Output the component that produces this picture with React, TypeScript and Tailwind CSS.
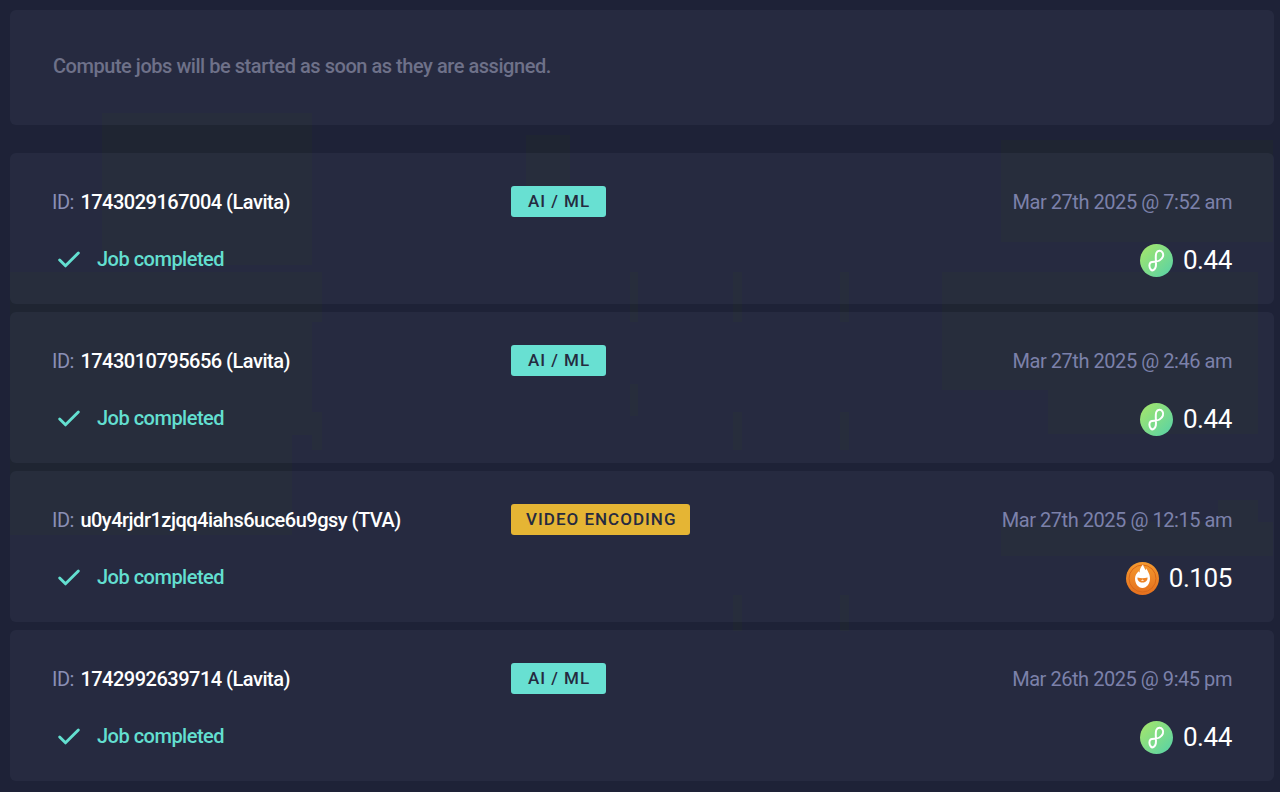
import { Check } from 'lucide-react';

const jobs = [
  { id: '1743029167004 (Lavita)', tag: 'AI / ML', date: 'Mar 27th 2025 @ 7:52 am', amount: '0.44', coin: 'flux' },
  { id: '1743010795656 (Lavita)', tag: 'AI / ML', date: 'Mar 27th 2025 @ 2:46 am', amount: '0.44', coin: 'flux' },
  { id: 'u0y4rjdr1zjqq4iahs6uce6u9gsy (TVA)', tag: 'VIDEO ENCODING', date: 'Mar 27th 2025 @ 12:15 am', amount: '0.105', coin: 'tva' },
  { id: '1742992639714 (Lavita)', tag: 'AI / ML', date: 'Mar 26th 2025 @ 9:45 pm', amount: '0.44', coin: 'flux' },
];

// blocks of the dim page backdrop that show through the cards
const blocks = [
  [102, 113, 210, 152],
  [526, 135, 44, 78],
  [1001, 140, 272, 102],
  [10, 272, 312, 50],
  [10, 322, 302, 113],
  [10, 435, 282, 100],
  [312, 412, 10, 38],
  [942, 272, 316, 118],
  [1048, 390, 210, 44],
  [1001, 522, 272, 34],
  [1218, 500, 40, 22],
  [630, 272, 8, 50],
  [733, 272, 9, 50],
  [840, 272, 9, 50],
  [630, 384, 8, 32],
  [733, 412, 9, 38],
  [840, 412, 9, 38],
  [733, 595, 9, 36],
  [840, 595, 9, 36],
];

const Backdrop = () => (
  <svg width="1280" height="792" className="absolute inset-0">
    {blocks.map(([x, y, w, h]) => (
      <rect key={`${x}-${y}`} x={x} y={y} width={w} height={h} fill="#1f2532" />
    ))}
  </svg>
);

const FluxCoin = ({ uid }: { uid: string }) => (
  <svg width="33" height="33" viewBox="0 0 33 33" className="shrink-0">
    <defs>
      <linearGradient id={uid} x1="0" y1="0" x2="1" y2="1">
        <stop offset="0" stopColor="#a9e768" />
        <stop offset="1" stopColor="#55d1a9" />
      </linearGradient>
    </defs>
    <circle cx="16.5" cy="16.5" r="16.5" fill={`url(#${uid})`} />
    <path
      d="M10.500 18.500C13 17.500 17 18 19.500 16.500 23 14.500 24 11 22.500 8.500 21 6 17.500 6 16.300 9 15 12.500 16.500 18 15.800 22.500 15.300 25.500 12.500 27.500 10.800 25.500 9 23.500 9 20 10.500 18.500z"
      fill="none"
      stroke="#fff"
      strokeWidth="2"
      strokeLinejoin="round"
    />
  </svg>
);

const TvaCoin = ({ uid }: { uid: string }) => (
  <svg width="33" height="33" viewBox="0 0 33 33" className="shrink-0">
    <defs>
      <linearGradient id={uid} x1="0" y1="0" x2="0" y2="1">
        <stop offset="0" stopColor="#f59a2e" />
        <stop offset="1" stopColor="#e5701e" />
      </linearGradient>
    </defs>
    <circle cx="16.5" cy="16.5" r="16.5" fill={`url(#${uid})`} />
    <circle cx="16.5" cy="16.5" r="13.500" fill="none" stroke="#d9691b" strokeWidth="1" />
    <path
      d="M17 2.500c.6 2.600 1.700 3.800 2.500 5.500.7-.4 1-1 1.200-1.700 0 2.500 3.300 4.600 3.300 10.200 0 5-3.200 9.500-7.500 9.500S9 21.500 9 16.500c0-3.600 2-5.400 3.500-7.300.3.700.6 1 1.100 1.300-.2-3 1.400-5.700 3.400-8z"
      fill="#fff"
    />
    <path d="M11.500 15.500c3.300 1.100 6.700 1.100 10 0 .3 2.200-1 4.800-5 5.100-4-.3-5.300-2.900-5-5.100z" fill="#ee8427" />
    <path d="M16.500 17.500l1.600 1.200h-3.200z" fill="#fff" />
  </svg>
);

export default function App() {
  return (
    <div
      className="relative min-h-[792px] overflow-hidden bg-[#1e2237] pt-[10px] pl-[10px] pr-[6px] flex flex-col"
      style={{ fontFamily: 'Roboto, sans-serif' }}
    >
      <Backdrop />

      <div className="relative h-[115px] bg-[#555f7b]/15 rounded-md pl-[43px] pb-[3px] flex items-center mb-[28px]">
        <span className="text-[#6e7189] text-[20px] font-medium tracking-[-0.46px]">
          Compute jobs will be started as soon as they are assigned.
        </span>
      </div>

      <div className="relative flex flex-col gap-2">
        {jobs.map((job, i) => (
          <div key={job.id} className="h-[151px] bg-[#555f7b]/15 rounded-md pl-[42px] pr-[42px] pt-[33px]">
            <div className="flex items-center h-[31px]">
              <div className="w-[459px] text-[20px] tracking-[-0.5px] whitespace-nowrap">
                <span className="text-[#8a8fb5] mr-[2px]">ID: </span>
                <span className="text-white font-medium">{job.id}</span>
              </div>
              <span
                className={`h-[31px] min-w-[95px] pl-[15px] pr-[14px] flex items-center justify-center rounded-[3px] text-[17px] font-medium tracking-[1px] text-[#252a40] ${
                  job.coin === 'tva' ? 'bg-[#e5b534]' : 'bg-[#68e0d2]'
                }`}
              >
                {job.tag}
              </span>
              <span className="ml-auto text-[20px] tracking-[-0.45px] text-[#7c81aa]">{job.date}</span>
            </div>
            <div className="flex items-center h-[33px] mt-[26px]">
              <Check size={28} strokeWidth={2.5} className="text-[#63dfd0] ml-[3px]" />
              <span className="ml-[14px] mb-[2px] text-[20px] tracking-[-0.5px] font-medium text-[#63dfd0]">Job completed</span>
              <div className="ml-auto pt-[2px] flex items-center gap-[10px]">
                {job.coin === 'flux' ? <FluxCoin uid={`flux-${i}`} /> : <TvaCoin uid={`tva-${i}`} />}
                <span className="text-white text-[26px] tracking-[-0.4px]">{job.amount}</span>
              </div>
            </div>
          </div>
        ))}
      </div>
    </div>
  );
}
